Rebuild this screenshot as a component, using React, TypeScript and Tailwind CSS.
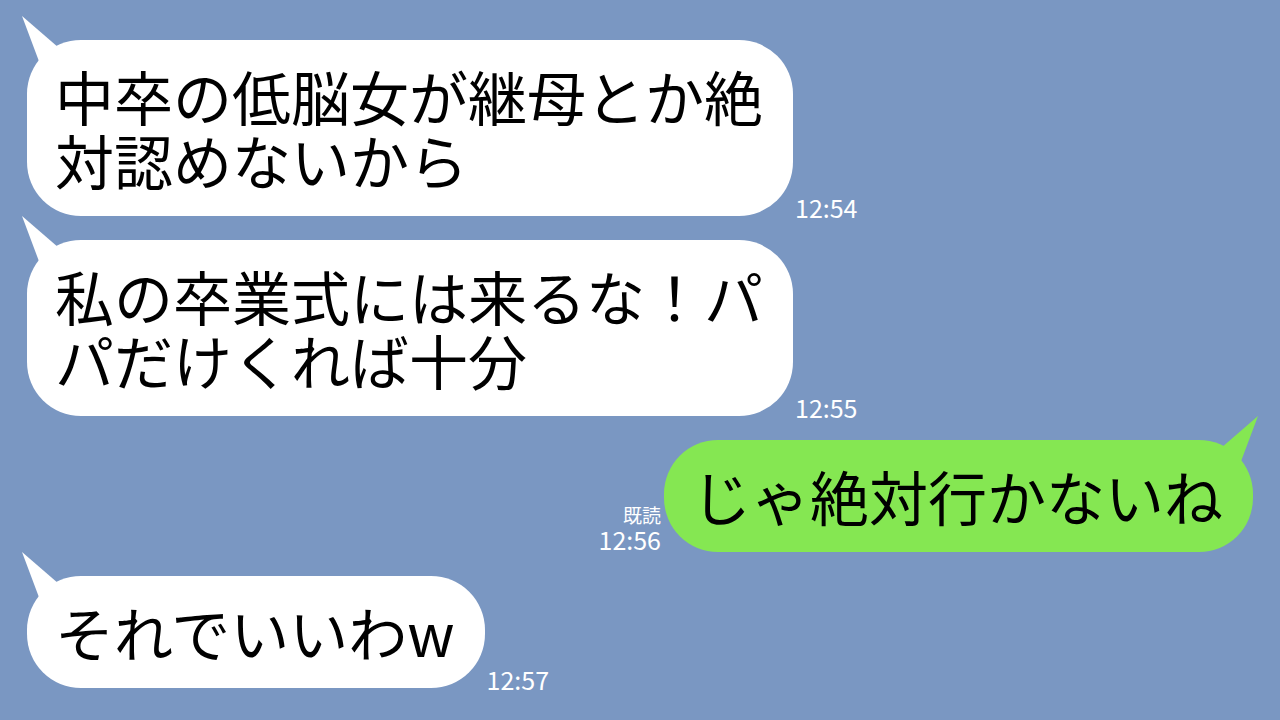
const font = "font-['Noto_Sans_CJK_JP','Noto_Sans_CJK_SC',sans-serif]";

type Msg =
  | { side: "in"; lines: string[]; time: string }
  | { side: "out"; lines: string[]; time: string; read: boolean };

const messages: Msg[] = [
  { side: "in", lines: ["中卒の低脳女が継母とか絶", "対認めないから"], time: "12:54" },
  { side: "in", lines: ["私の卒業式には来るな！パ", "パだけくれば十分"], time: "12:55" },
  { side: "out", lines: ["じゃ絶対行かないね"], time: "12:56", read: true },
  { side: "in", lines: ["それでいいわw"], time: "12:57" },
];

function Tail({ out }: { out?: boolean }) {
  // little speech tail poking out of the top corner
  return (
    <svg
      width="48"
      height="52"
      viewBox="0 0 48 52"
      className={`absolute top-[-26px] ${out ? "right-[-8px] -scale-x-100" : "left-[-8px]"}`}
    >
      <polygon points="3,2 40,34 21,50" fill={out ? "#85e752" : "#ffffff"} />
    </svg>
  );
}

function Bubble({ lines, out }: { lines: string[]; out?: boolean }) {
  return (
    <div
      className={`relative rounded-[54px] pl-[28px] pr-[30px] py-6 text-[59px] leading-[64px] text-black whitespace-nowrap ${
        out ? "bg-[#85e752]" : "bg-white"
      }`}
    >
      <Tail out={out} />
      <div className="relative">
        {lines.map((l) => (
          <div key={l}>{l}</div>
        ))}
      </div>
    </div>
  );
}

export default function App() {
  return (
    <div
      className={`w-[1280px] h-[720px] overflow-hidden bg-[#7a97c2] flex flex-col gap-6 pt-10 px-[27px] ${font}`}
    >
      {messages.map((m) =>
        m.side === "in" ? (
          <div key={m.time} className="flex items-end">
            <Bubble lines={m.lines} />
            <span className="ml-[2px] mb-[-4px] text-[25px] leading-none text-white">{m.time}</span>
          </div>
        ) : (
          <div key={m.time} className="flex items-end justify-end">
            <div className="mr-[3px] flex flex-col items-end text-white leading-none">
              {m.read && <span className="text-[19px] mb-[3px]">既読</span>}
              <span className="text-[25px]">{m.time}</span>
            </div>
            <Bubble lines={m.lines} out />
          </div>
        )
      )}
    </div>
  );
}
